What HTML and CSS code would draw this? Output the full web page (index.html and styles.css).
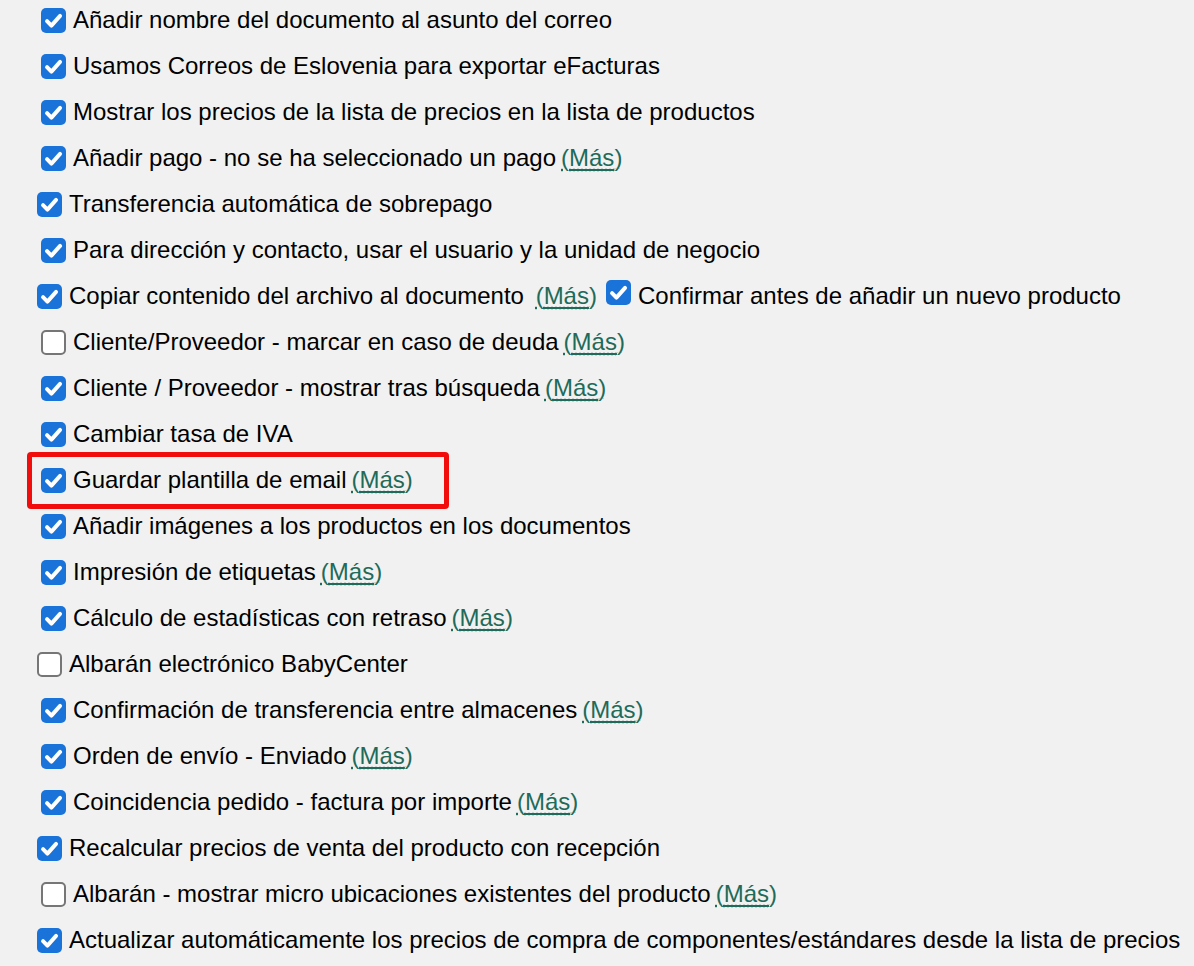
FILE: index.html
```html
<!DOCTYPE html>
<html lang="es">
<head>
    <meta charset="UTF-8">
    <meta name="viewport" content="width=device-width, initial-scale=1.0">
    <title>Ajustes</title>
    <link rel="stylesheet" href="styles.css">
</head>
<body>

<div class="settings">
    <div class="row"><span class="box on"></span><span class="label">Añadir nombre del documento al asunto del correo</span></div>
    <div class="row"><span class="box on"></span><span class="label">Usamos Correos de Eslovenia para exportar eFacturas</span></div>
    <div class="row"><span class="box on"></span><span class="label">Mostrar los precios de la lista de precios en la lista de productos</span></div>
    <div class="row"><span class="box on"></span><span class="label">Añadir pago - no se ha seleccionado un pago</span><a class="more" href="#">(<span>Más</span>)</a></div>
    <div class="row flush"><span class="box on"></span><span class="label">Transferencia automática de sobrepago</span></div>
    <div class="row"><span class="box on"></span><span class="label">Para dirección y contacto, usar el usuario y la unidad de negocio</span></div>
    <div class="row flush"><span class="box on"></span><span class="label">Copiar contenido del archivo al documento </span><a class="more" href="#">(<span>Más</span>)</a><span class="box on second"></span><span class="label">Confirmar antes de añadir un nuevo producto</span></div>
    <div class="row"><span class="box"></span><span class="label">Cliente/Proveedor - marcar en caso de deuda</span><a class="more" href="#">(<span>Más</span>)</a></div>
    <div class="row"><span class="box on"></span><span class="label">Cliente / Proveedor - mostrar tras búsqueda</span><a class="more" href="#">(<span>Más</span>)</a></div>
    <div class="row"><span class="box on"></span><span class="label">Cambiar tasa de IVA</span></div>
    <div class="row marked"><span class="highlight"></span><span class="box on"></span><span class="label">Guardar plantilla de email</span><a class="more" href="#">(<span>Más</span>)</a></div>
    <div class="row"><span class="box on"></span><span class="label">Añadir imágenes a los productos en los documentos</span></div>
    <div class="row"><span class="box on"></span><span class="label">Impresión de etiquetas</span><a class="more" href="#">(<span>Más</span>)</a></div>
    <div class="row"><span class="box on"></span><span class="label">Cálculo de estadísticas con retraso</span><a class="more" href="#">(<span>Más</span>)</a></div>
    <div class="row flush"><span class="box"></span><span class="label">Albarán electrónico BabyCenter</span></div>
    <div class="row"><span class="box on"></span><span class="label">Confirmación de transferencia entre almacenes</span><a class="more" href="#">(<span>Más</span>)</a></div>
    <div class="row"><span class="box on"></span><span class="label">Orden de envío - Enviado</span><a class="more" href="#">(<span>Más</span>)</a></div>
    <div class="row"><span class="box on"></span><span class="label">Coincidencia pedido - factura por importe</span><a class="more" href="#">(<span>Más</span>)</a></div>
    <div class="row flush"><span class="box on"></span><span class="label">Recalcular precios de venta del producto con recepción</span></div>
    <div class="row"><span class="box"></span><span class="label">Albarán - mostrar micro ubicaciones existentes del producto</span><a class="more" href="#">(<span>Más</span>)</a></div>
    <div class="row flush"><span class="box on"></span><span class="label">Actualizar automáticamente los precios de compra de componentes/estándares desde la lista de precios</span></div>
</div>

</body>
</html>
```

FILE: styles.css
```css
body {
    font-family: 'Liberation Sans', Arial, sans-serif;
    background-color: #f1f1f1;
    color: #000;
    margin: 0;
    overflow: hidden;
}
.settings {
    margin-top: -3px;
}
.row {
    position: relative;
    display: flex;
    align-items: center;
    height: 46px;
    padding-left: 41px;
    font-size: 24px;
    white-space: nowrap;
}
.row.flush {
    padding-left: 37px;
}
.box {
    flex: none;
    width: 25px;
    height: 25px;
    box-sizing: border-box;
    border: 2px solid #767676;
    border-radius: 5px;
    background-color: #fff;
    margin-right: 7px;
}
.box.on {
    border: none;
    background-color: #1a73d8;
    background-image: url("data:image/svg+xml,%3Csvg xmlns='http://www.w3.org/2000/svg' viewBox='0 0 24 24'%3E%3Cpath d='M5.8 12.6l4.2 4.3L18.3 7.6' fill='none' stroke='%23fff' stroke-width='3.8' stroke-linecap='round' stroke-linejoin='round'/%3E%3C/svg%3E");
    background-size: 25px 25px;
}
.box.second {
    margin-left: 9px;
    margin-top: -8px;
}
.label {
    white-space: pre;
}
.more {
    color: #1e6b5a;
    text-decoration: underline dotted;
    text-underline-offset: 3px;
    margin-left: 5px;
}
.more span {
    text-decoration: underline;
    text-underline-offset: 3px;
}
.highlight {
    position: absolute;
    left: 27px;
    top: -5px;
    width: 422px;
    height: 57px;
    box-sizing: border-box;
    border: 5px solid #f20d0d;
    border-radius: 4px;
}
```
